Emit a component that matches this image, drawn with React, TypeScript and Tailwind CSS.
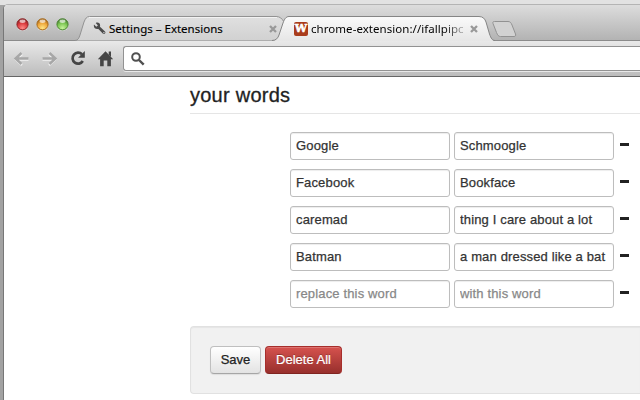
import React from "react";

const rows = [
  ["Google", "Schmoogle"],
  ["Facebook", "Bookface"],
  ["caremad", "thing I care about a lot"],
  ["Batman", "a man dressed like a bat"],
  ["", ""],
];

function Light({ rim, base, glow }: { rim: string; base: string; glow: string }) {
  const id = "light" + base.slice(1);
  return (
    <svg width="13" height="13" viewBox="0 0 13 13">
      <defs>
        <radialGradient id={id} cx="0.5" cy="0.85" r="0.75">
          <stop offset="0" stopColor={glow} />
          <stop offset="0.65" stopColor={base} />
          <stop offset="1" stopColor={rim} />
        </radialGradient>
      </defs>
      <circle cx="6.5" cy="7" r="6" fill="#f4f4f4" opacity="0.6" />
      <circle cx="6.5" cy="6.3" r="5.6" fill={`url(#${id})`} stroke={rim} strokeWidth="1" />
      <ellipse cx="6.5" cy="3.2" rx="3" ry="1.7" fill="#fff" opacity="0.65" />
    </svg>
  );
}

function Close() {
  return (
    <svg width="8" height="8" viewBox="0 0 8 8" className="shrink-0">
      <path d="M1 1L7 7M7 1L1 7" stroke="#999" strokeWidth="2.3" />
    </svg>
  );
}

function Field({ value, hint }: { value: string; hint: string }) {
  return (
    <input
      defaultValue={value}
      placeholder={hint}
      className="h-7 w-40 rounded-[3px] border border-[#bdbdbd] bg-white px-[5px] pb-[2px] text-[13px] tracking-[0.15px] text-[#333] shadow-[inset_0_1px_1px_rgba(0,0,0,0.075)] outline-none [-webkit-text-stroke:0.25px] placeholder:text-[#888] placeholder:opacity-100"
    />
  );
}

function TabStrip() {
  return (
    <div className="flex h-9 shrink-0 bg-linear-to-b from-[#dedede] to-[#b3b3b3]">
      <div className="flex w-[71px] shrink-0 items-start gap-[7px] pl-[11.5px] pt-[14px]">
        <Light rim="#8d2528" base="#d9383b" glow="#ff8b88" />
        <Light rim="#a66a1d" base="#eda438" glow="#ffe787" />
        <Light rim="#4c8434" base="#79c450" glow="#c8f49d" />
      </div>
      <div className="relative h-9 w-[212px] shrink-0">
        <svg className="absolute inset-0" width="212" height="37" viewBox="0 0 212 37">
          <defs>
            <linearGradient id="inactive" x2="0" y2="1">
              <stop stopColor="#e0e0e0" />
              <stop offset="1" stopColor="#d1d1d1" />
            </linearGradient>
          </defs>
          <path d="M0 36.5C3 36.5 4 34 5 31L9 18C10.5 14.5 11.5 12.5 14.5 12.5H201C205 12.5 207 14.5 209 18L208 36.5Z" fill="url(#inactive)" />
          <path d="M0 36.5C3 36.5 4 34 5 31L9 18C10.5 14.5 11.5 12.5 14.5 12.5H201C205 12.5 207 14.5 209 18L210 21" fill="none" stroke="#929292" />
          <path d="M14 13.5H202" stroke="#f2f2f2" />
        </svg>
        <div className="relative flex items-center gap-[3px] pl-[18px] pt-[18px]">
          <svg width="13" height="13" viewBox="0 0 13 13" className="shrink-0">
            <path d="M1 2.6L3.3 4.8L4.9 3.4L2.7 1C4.8-.2 7.2 1 7.1 3.4L7 4.8L12 9.4C13.2 11 11.6 12.8 10 11.8L5.4 6.9C3 7.8 .1 5.9 1 2.6Z" fill="#4c4c4c" />
            <circle cx="10.9" cy="10.7" r=".7" fill="#ddd" />
          </svg>
          <span className="w-[157px] whitespace-nowrap font-['Noto_Sans','Open_Sans',sans-serif] text-[11.5px] leading-[13px] text-black [-webkit-text-stroke:0.15px]">Settings – Extensions</span>
          <Close />
        </div>
      </div>
      <div className="relative -ml-[15px] h-9 w-[221px] shrink-0">
        <svg className="absolute inset-0 overflow-visible" width="221" height="38" viewBox="0 0 221 38">
          <defs>
            <linearGradient id="active" x2="0" y2="1">
              <stop stopColor="#fafafa" />
              <stop offset="1" stopColor="#e6e6e6" />
            </linearGradient>
          </defs>
          <path d="M0 37C4 37 6 34 7 31L11 19C12.5 15 14 12.5 17 12.5H207C211 12.5 213 15 214 18L217.5 30C219 34.5 220.5 37 223 37Z" fill="url(#active)" />
          <path d="M0 36.5C4 36.5 6 34 7 31L11 19C12.5 15 14 12.5 17 12.5H207C211 12.5 213 15 214 18L217.5 30C219 34.5 220.5 36.5 223 36.5" fill="none" stroke="#858585" />
        </svg>
        <div className="relative flex items-center pl-[22px] pt-[18px]">
          <div className="flex size-[14px] shrink-0 items-center justify-center rounded-[2px] bg-[#a93c1c] font-['DejaVu_Serif',serif] text-[11px] font-bold leading-[14px] text-white [-webkit-text-stroke:0.5px]">W</div>
          <span className="ml-[3px] mr-[5px] w-[154px] whitespace-nowrap bg-linear-to-r from-black from-86% to-[#00000030] to-100% bg-clip-text font-['Noto_Sans','Open_Sans',sans-serif] text-[11.5px] leading-[14px] tracking-[0.05px] text-transparent">chrome-extension://ifallpipc</span>
          <Close />
        </div>
      </div>
      <svg width="28" height="36" viewBox="0 0 28 36" className="-ml-[3px] shrink-0">
        <path d="M4.5 17.5H18C20 17.5 21 18.5 22 21L25.5 30C26 31.5 25.5 32.5 24 32.5H10.5C8.5 32.5 7.5 31 6.5 28.5L3 19.5C2.5 18 3 17.5 4.5 17.5Z" fill="#d2d2d2" stroke="#929292" />
      </svg>
    </div>
  );
}

function Toolbar() {
  return (
    <div className="flex h-9 shrink-0 border-t border-[#8b8b8b] bg-linear-to-b from-[#e9e9e9] to-[#bcbcbc]">
      <svg width="119" height="35" viewBox="0 0 119 35" className="shrink-0">
        <g transform="translate(-4 -41)" fill="none">
          <path d="M28.5 59.5H17M22 54L16 59.5L22 65" stroke="#f2f2f2" strokeWidth="2.4" />
          <path d="M28.5 58.5H16.5M21.5 53L15.5 58.5L21.5 64" stroke="#a7a7a7" strokeWidth="2.4" />
          <path d="M42.5 59.5H54M49 54L55 59.5L49 65" stroke="#f2f2f2" strokeWidth="2.4" />
          <path d="M42.5 58.5H54.5M49.5 53L55.5 58.5L49.5 64" stroke="#a7a7a7" strokeWidth="2.4" />
          <path d="M82 54.3A5.5 5.5 0 1 0 82.8 61" stroke="#454545" strokeWidth="2.7" />
          <path d="M84.8 51V57.8H78Z" fill="#454545" />
          <path d="M97.8 59.3L105.5 51.3L113.2 59.3H110.9V66.2H107.3V60.5H103.7V66.2H100.1V59.3Z" fill="#454545" />
          <path d="M108.7 51.5H111V57L108.7 54.7Z" fill="#454545" />
        </g>
      </svg>
      <div className="mt-[5px] flex h-[25px] flex-1 items-center rounded-l-[3px] border border-r-0 border-[#929292] bg-white pl-[7px] shadow-[0_1px_0_#e8e8e8]">
        <svg width="14" height="14" viewBox="0 0 14 14">
          <circle cx="5" cy="5" r="3.8" fill="none" stroke="#505050" strokeWidth="2" />
          <path d="M8 8L12.7 12.7" stroke="#505050" strokeWidth="2.4" />
        </svg>
      </div>
    </div>
  );
}

export default function App() {
  return (
    <div className="flex h-[400px] w-[640px] flex-col overflow-hidden bg-linear-to-r from-[#a2a2a2] to-[#a9a9a9] font-['Liberation_Sans',Arial,sans-serif]">
      <div className="h-[5px] shrink-0 bg-[#e2e2e2]" />
      <div className="-mt-px ml-[3px] flex flex-1 flex-col overflow-hidden rounded-tl-[5px] border-l border-t border-l-[#777] border-t-[#b4b4b4] bg-white">
        <div className="-mt-px flex shrink-0 flex-col">
          <TabStrip />
          <Toolbar />
        </div>
        <main className="flex-1 border-t border-[#666] pl-[186px]">
          <h1 className="h-[37px] border-b border-[#e5e5e5] pt-[4px] text-[20px] leading-[28px] tracking-[0.25px] text-[#222] [-webkit-text-stroke:0.3px]">your words</h1>
          <div className="mt-[18px] flex flex-col gap-[9px] pl-[100px]">
            {rows.map(([word, replacement], i) => (
              <div key={i} className="flex h-7 items-start gap-1">
                <Field value={word} hint="replace this word" />
                <Field value={replacement} hint="with this word" />
                <button aria-label="Remove" className="ml-[2px] mt-[11px] h-[3px] w-[9px] bg-[#222]" />
              </div>
            ))}
          </div>
          <div className="mt-[18px] flex h-[68px] gap-1 rounded-l-[4px] border border-r-0 border-[#e1e1e1] bg-[#f1f1f1] pl-[19px] pt-[19px] shadow-[inset_0_1px_1px_rgba(0,0,0,0.05)]">
            <button className="h-7 w-[51px] rounded-[4px] border border-[#bfbfbf] border-b-[#a6a6a6] bg-linear-to-b from-white to-[#e3e3e3] text-[13px] text-[#222] shadow-[0_1px_1px_rgba(0,0,0,0.08)] [-webkit-text-stroke:0.25px]">Save</button>
            <button className="h-7 w-[77px] rounded-[4px] border border-[#a62e2b] border-b-[#802420] bg-linear-to-b from-[#d6524e] to-[#98302d] text-[13px] text-white shadow-[inset_0_1px_0_rgba(255,255,255,0.2)] [-webkit-text-stroke:0.2px] [text-shadow:0_-1px_0_rgba(0,0,0,0.25)]">Delete All</button>
          </div>
        </main>
      </div>
    </div>
  );
}
